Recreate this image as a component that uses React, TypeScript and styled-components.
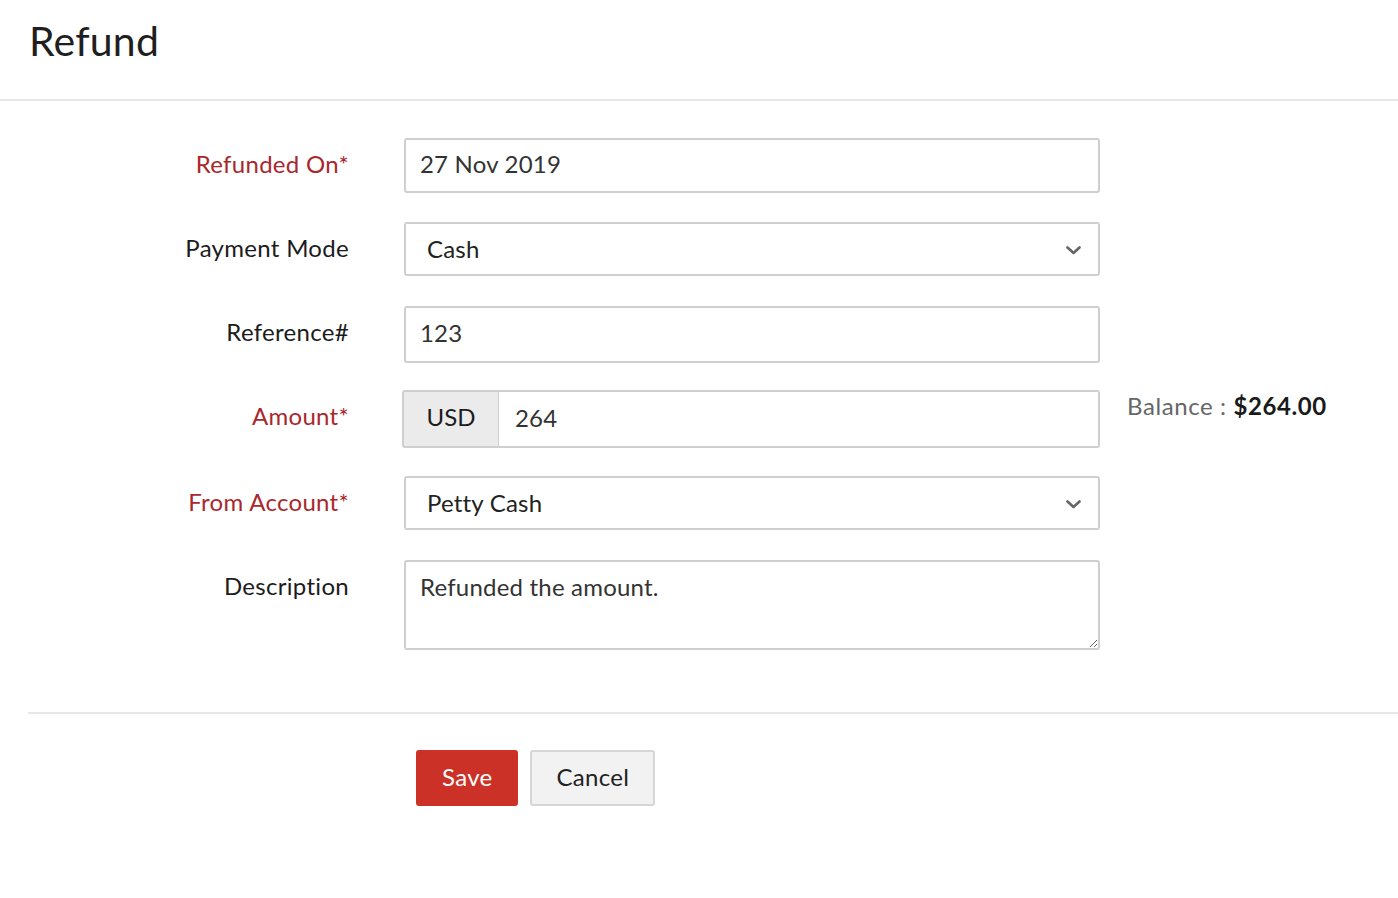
import React from "react";
import styled, { createGlobalStyle } from "styled-components";

const GlobalStyle = createGlobalStyle`
   body {
      margin: 0;
      background: #ffffff;
      font-family: Lato, "Open Sans", "Liberation Sans", sans-serif;
      color: #222;
   }
   * {
      box-sizing: border-box;
   }
`;

const Page = styled.div`
   width: 100%;
   min-height: 898px;
   background: #fff;
`;

const Header = styled.header`
   height: 101px;
   padding-left: 29px;
   display: flex;
   align-items: center;
   border-bottom: 2px solid #e8e8e8;
`;

const Title = styled.h1`
   margin: 0 0 18px 0;
   font-size: 41px;
   font-weight: 400;
   color: #1f1f1f;
   letter-spacing: 0.2px;
`;

const Form = styled.form`
   padding-top: 37px;
   display: flex;
   flex-direction: column;
`;

const Row = styled.div<{ $height?: number }>`
   display: grid;
   grid-template-columns: 349px 696px auto;
   column-gap: 55px;
   align-items: start;
   height: ${({ $height }) => ($height ? `${$height}px` : "84px")};
`;

const Label = styled.label<{ $required?: boolean }>`
   justify-self: end;
   line-height: 52px;
   font-size: 24px;
   letter-spacing: 0.3px;
   color: ${({ $required }) => ($required ? "#a9282d" : "#1c1c1c")};
`;

const TextInput = styled.input<{ $height?: number }>`
   width: 100%;
   height: ${({ $height }) => ($height ? `${$height}px` : "55px")};
   border: 2px solid #cfcfcf;
   border-radius: 3px;
   padding: 0 14px 4px;
   font-family: inherit;
   font-size: 24px;
   letter-spacing: 0.2px;
   color: #333;
   outline: none;
   background: #fff;
`;

const SelectBox = styled.div`
   position: relative;
   width: 100%;
   height: 54px;
   border: 2px solid #cfcfcf;
   border-radius: 3px;
   display: flex;
   align-items: center;
   padding: 0 21px 2px;
   font-size: 24px;
   letter-spacing: 0.2px;
   color: #222;
   background: #fff;
`;

const Chevron = styled.svg`
   position: absolute;
   right: 17px;
   top: 50%;
   margin-top: -3px;
`;

const AmountGroup = styled.div`
   display: flex;
   width: 698px;
   margin-left: -2px;
   height: 58px;
`;

const Prefix = styled.span`
   width: 97px;
   flex-shrink: 0;
   display: flex;
   align-items: center;
   justify-content: center;
   padding-bottom: 6px;
   background: #ebebeb;
   border: 2px solid #cfcfcf;
   border-right: 1px solid #cfcfcf;
   border-radius: 3px 0 0 3px;
   font-size: 24px;
   color: #1c1c1c;
`;

const AmountInput = styled(TextInput)`
   border-left: none;
   border-radius: 0 3px 3px 0;
   padding-left: 16px;
`;

const Balance = styled.div`
   margin-left: -28px;
   line-height: 32px;
   font-size: 24px;
   letter-spacing: 0.6px;
   color: #666;
   white-space: nowrap;

   strong {
      color: #1a1a1a;
      font-weight: 700;
   }
`;

const TextArea = styled.textarea`
   width: 100%;
   height: 90px;
   border: 2px solid #cfcfcf;
   border-radius: 3px;
   padding: 10px 14px;
   font-family: inherit;
   font-size: 24px;
   letter-spacing: 0.2px;
   color: #333;
   outline: none;
   resize: vertical;
`;

const Footer = styled.div`
   margin: 62px 0 0 28px;
   border-top: 2px solid #e8e8e8;
   padding: 36px 0 0 388px;
   display: flex;
   gap: 12px;
`;

const Button = styled.button<{ $primary?: boolean }>`
   height: 56px;
   padding: 0 24px 3px;
   border-radius: 3px;
   font-family: inherit;
   font-size: 24px;
   letter-spacing: 0.3px;
   cursor: pointer;
   border: 2px solid ${({ $primary }) => ($primary ? "#cc3127" : "#d6d6d6")};
   background: ${({ $primary }) => ($primary ? "#cc3127" : "#f2f2f2")};
   color: ${({ $primary }) => ($primary ? "#fff" : "#222")};
`;

const ChevronDown = () => (
   <Chevron width="15" height="9" viewBox="0 0 15 9">
      <path d="M1.5 1.5 L7.5 7 L13.5 1.5" fill="none" stroke="#666" strokeWidth="2.6" strokeLinecap="round" strokeLinejoin="round" />
   </Chevron>
);

export default function App() {
   return (
      <Page>
         <GlobalStyle />
         <Header>
            <Title>Refund</Title>
         </Header>
         <Form onSubmit={(e) => e.preventDefault()}>
            <Row>
               <Label $required>Refunded On*</Label>
               <TextInput defaultValue="27 Nov 2019" />
               <span />
            </Row>
            <Row>
               <Label>Payment Mode</Label>
               <SelectBox>
                  Cash
                  <ChevronDown />
               </SelectBox>
               <span />
            </Row>
            <Row>
               <Label>Reference#</Label>
               <TextInput $height={57} defaultValue="123" />
               <span />
            </Row>
            <Row $height={86}>
               <Label $required>Amount*</Label>
               <AmountGroup>
                  <Prefix>USD</Prefix>
                  <AmountInput $height={58} defaultValue="264" />
               </AmountGroup>
               <Balance>
                  Balance : <strong>$264.00</strong>
               </Balance>
            </Row>
            <Row>
               <Label $required>From Account*</Label>
               <SelectBox>
                  Petty Cash
                  <ChevronDown />
               </SelectBox>
               <span />
            </Row>
            <Row $height={90}>
               <Label>Description</Label>
               <TextArea defaultValue="Refunded the amount." />
               <span />
            </Row>
            <Footer>
               <Button $primary type="submit">Save</Button>
               <Button type="button">Cancel</Button>
            </Footer>
         </Form>
      </Page>
   );
}
